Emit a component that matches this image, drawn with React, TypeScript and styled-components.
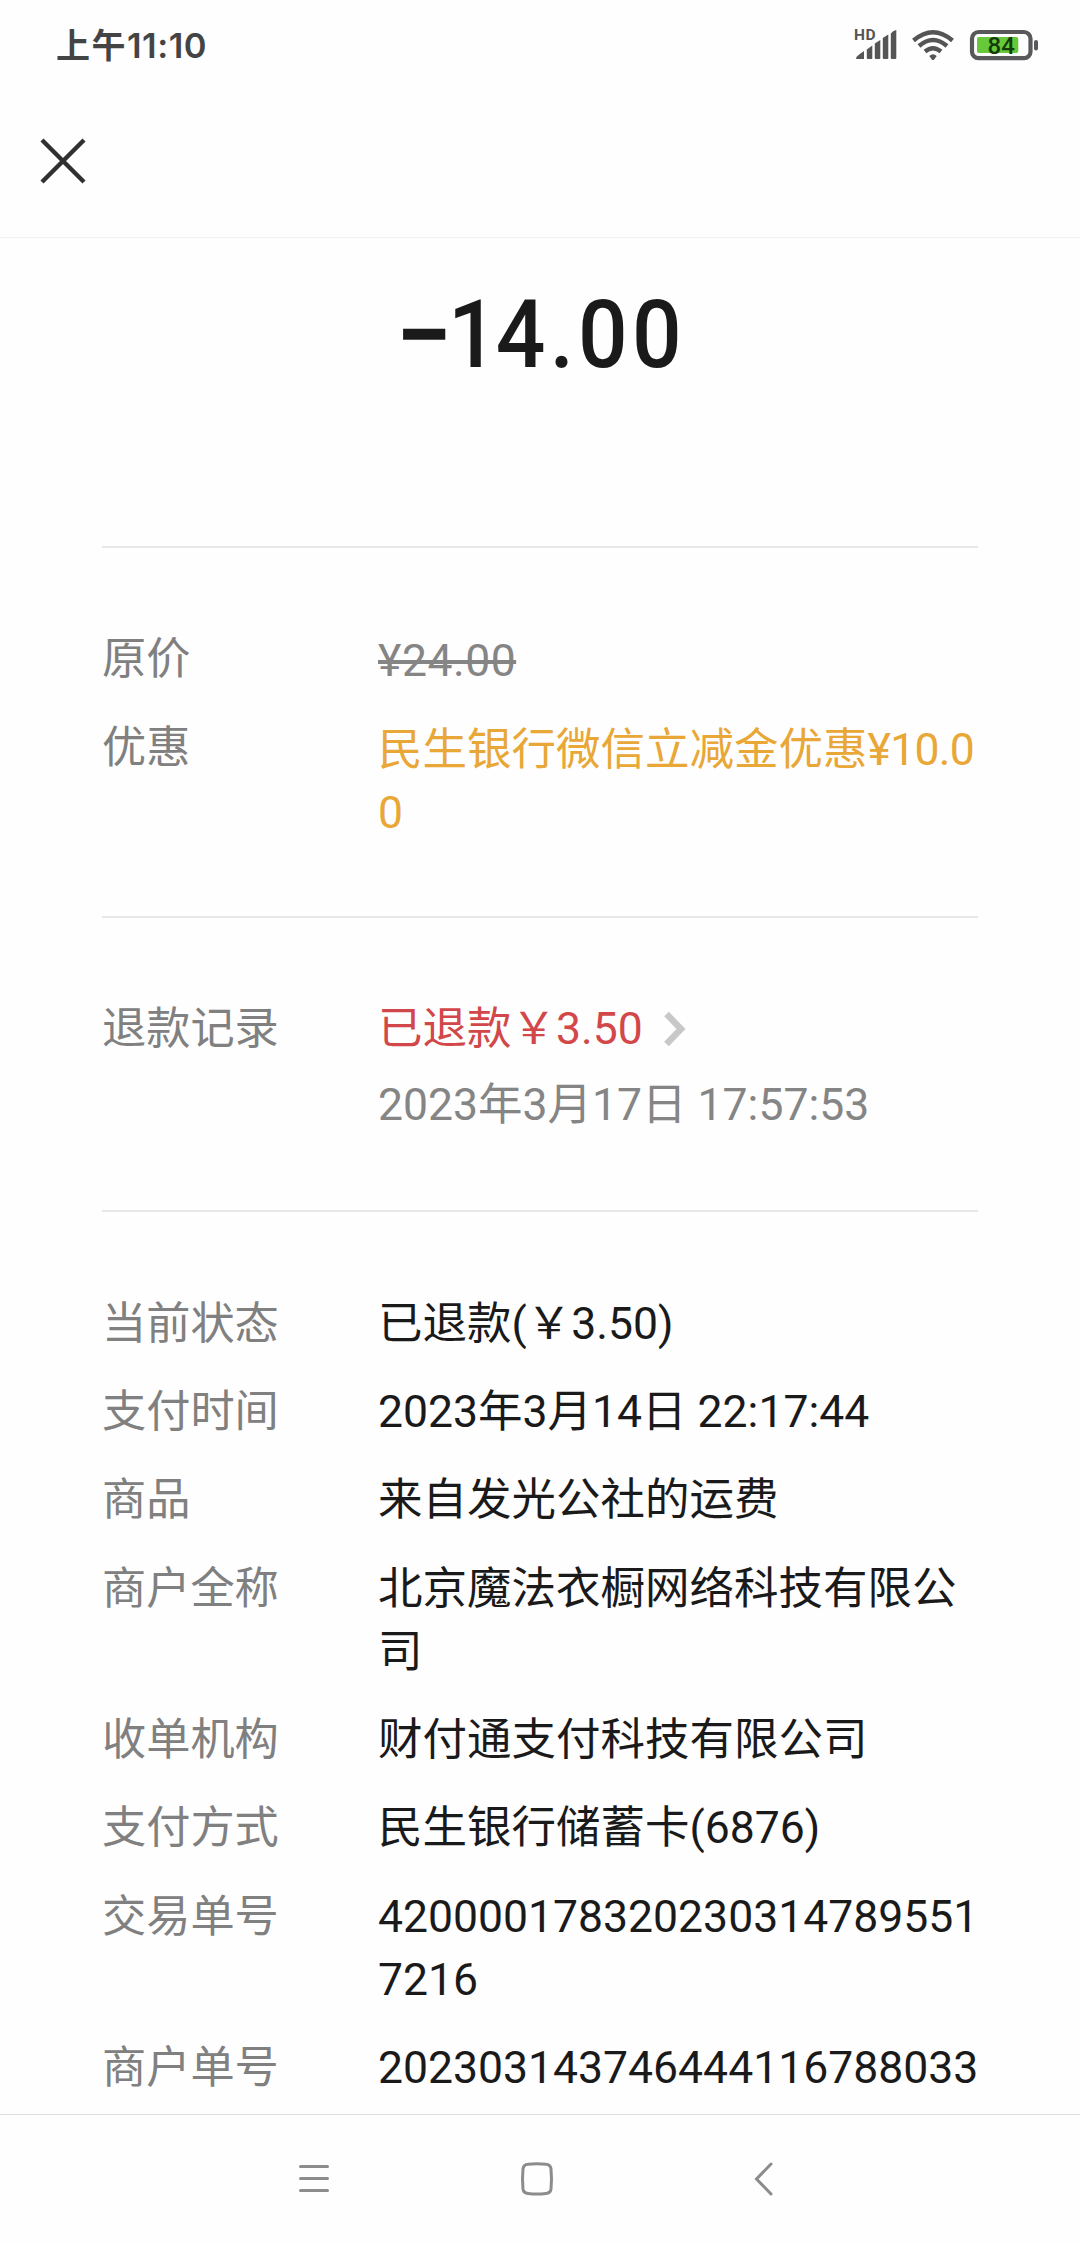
import React from "react";
import styled, { createGlobalStyle } from "styled-components";

const GlobalStyle = createGlobalStyle`
  * { box-sizing: border-box; }
  body { margin: 0; background: #fefefe; }
`;

const Screen = styled.div`
  display: flex;
  flex-direction: column;
  width: 1080px;
  height: 2244px;
  overflow: hidden;
  background: #fefefe;
  color: #1a1a1a;
  font-family: Roboto, "Noto Sans CJK SC", sans-serif;
  font-size: 44.5px;
  line-height: 63px;
`;

const StatusBar = styled.header`
  display: flex;
  flex: none;
  align-items: center;
  justify-content: space-between;
  height: 90px;
  padding: 0 41px 0 56px;
  color: #444;
`;

const Clock = styled.div`
  padding-top: 2px;
  font: 600 34.5px/50px Inter, "Noto Sans CJK SC", sans-serif;
  letter-spacing: 0.5px;
`;

const Meridiem = styled.span`
  font-size: 34px;
  font-weight: 700;
  letter-spacing: 1.5px;
`;

const Indicators = styled.div`
  display: flex;
  align-items: center;
`;

const Toolbar = styled.div`
  display: flex;
  flex: none;
  align-items: center;
  height: 148px;
  padding: 0 0 6px 39px;
  border-bottom: 1px solid #f1f1f1;
`;

const IconButton = styled.button<{ $width: number; $height: number }>`
  display: grid;
  place-items: center;
  width: ${(p) => p.$width}px;
  height: ${(p) => p.$height}px;
  padding: 0;
  border: 0;
  background: none;
`;

const Content = styled.main`
  flex: 1;
  min-height: 0;
  overflow: hidden;
  padding: 0 102px;
`;

const Amount = styled.h1`
  display: flex;
  justify-content: center;
  margin: 0;
  height: 308px;
  padding-top: 41px;
  font-size: 95px;
  font-weight: 500;
  line-height: 112px;
`;

const Sign = styled.span`
  width: 52px;
  font-size: 100px;
  font-weight: 700;
  letter-spacing: -6px;
`;

const Figure = styled.span`
  width: 236px;
  letter-spacing: 4.5px;
  white-space: nowrap;
  transform: scaleX(0.92);
  transform-origin: left;
`;

const LeadDigit = styled.span`
  letter-spacing: -2px;
`;

const Section = styled.section<{ $top: number; $bottom: number; $gap: number }>`
  display: flex;
  flex-direction: column;
  gap: ${(p) => p.$gap}px;
  padding: ${(p) => p.$top}px 0 ${(p) => p.$bottom}px;
  border-top: 2px solid #e8e8e8;
`;

const Row = styled.div`
  display: grid;
  grid-template-columns: 276px 604px;
`;

const Label = styled.div<{ $raise?: number }>`
  margin-top: ${(p) => -(p.$raise ?? 0)}px;
  color: #808080;
  font-size: 44.2px;
`;

const Value = styled.div<{ $color?: string; $struck?: boolean }>`
  color: ${(p) => p.$color ?? "#1a1a1a"};
  word-break: break-all;
  text-decoration: ${(p) => (p.$struck ? "line-through 4px" : "none")};
  letter-spacing: ${(p) => (p.$struck ? "0.5px" : "0")};
`;

const Price = styled.span`
  letter-spacing: -0.7px;
`;

const RefundLink = styled.div`
  display: flex;
  align-items: center;
  gap: 20px;
  color: #d2484a;
`;

const RefundTime = styled.div`
  margin-top: 13px;
  color: #858585;
`;

const NavBar = styled.nav`
  display: flex;
  flex: none;
  align-items: flex-start;
  justify-content: space-between;
  height: 130px;
  padding: 39px 292px 0 290px;
  border-top: 1px solid #dedede;
`;

const details: [string, string][] = [
  ["当前状态", "已退款(￥3.50)"],
  ["支付时间", "2023年3月14日 22:17:44"],
  ["商品", "来自发光公社的运费"],
  ["商户全称", "北京魔法衣橱网络科技有限公司"],
  ["收单机构", "财付通支付科技有限公司"],
  ["支付方式", "民生银行储蓄卡(6876)"],
  ["交易单号", "4200001783202303147895517216"],
  ["商户单号", "202303143746444116788033"],
];

const StatusIcons = () => (
  <svg width="186" height="40" viewBox="853 25 186 40" fill="none">
    <text x="854" y="40" fontFamily="Roboto" fontSize="15.5" fontWeight="700" letterSpacing="0.6" fill="#555">HD</text>
    <g fill="#555">
      <path d="M856 58.2Q856 56.5 864 51V59H856.8Q856 59 856 58.2Z" />
      <path d="M866.8 49.5L872.3 45.5V58Q872.3 59 871.3 59H867.8Q866.8 59 866.8 58Z" />
      <path d="M874.8 43.5L880.3 40V58Q880.3 59 879.3 59H875.8Q874.8 59 874.8 58Z" />
      <path d="M882.8 38L888.3 34.5V58Q888.3 59 887.3 59H883.8Q882.8 59 882.8 58Z" />
      <path d="M890.8 33.5Q893.5 30 896.3 30V58Q896.3 59 895.3 59H891.8Q890.8 59 890.8 58Z" />
    </g>
    <g stroke="#555" strokeWidth="4.4">
      <path d="M913.5 40.5Q933 24 952.5 40.5" />
      <path d="M919 46Q933 34 947 46" />
      <path d="M925 51.5Q933 45 941 51.5" />
    </g>
    <path d="M929.3 56Q933 52.5 936.7 56L934.2 59.5Q933 60.5 931.8 59.5Z" fill="#555" />
    <rect x="972" y="32" width="58.5" height="26.2" rx="6.5" stroke="#59595c" strokeWidth="4.2" />
    <rect x="977" y="37" width="41.3" height="16" rx="2" fill="#67c83a" />
    <rect x="1034" y="40" width="4" height="10.5" rx="2" fill="#59595c" />
    <text x="987.5" y="54" fontFamily="Roboto" fontSize="24" fontWeight="500" fill="#123c08">84</text>
  </svg>
);

export default function App() {
  return (
    <Screen>
      <GlobalStyle />
      <StatusBar>
        <Clock>
          <Meridiem>上午</Meridiem>11:10
        </Clock>
        <Indicators>
          <StatusIcons />
        </Indicators>
      </StatusBar>

      <Toolbar>
        <IconButton $width={48} $height={48} aria-label="关闭">
          <svg width="48" height="48" viewBox="0 0 48 48" stroke="#303030" strokeWidth="4.4">
            <path d="M3 3L45 45M45 3L3 45" />
          </svg>
        </IconButton>
      </Toolbar>

      <Content>
        <Amount>
          <Sign>−</Sign>
          <Figure>
            <LeadDigit>1</LeadDigit>4.00
          </Figure>
        </Amount>

        <Section $top={82} $bottom={71} $gap={26}>
          <Row>
            <Label $raise={2}>原价</Label>
            <Value $color="#858585" $struck>¥24.00</Value>
          </Row>
          <Row>
            <Label $raise={2}>优惠</Label>
            <Value $color="#e8a736">
              民生银行微信立减金优惠<Price>¥10.0</Price><Price>0</Price>
            </Value>
          </Row>
        </Section>

        <Section $top={80} $bottom={73} $gap={0}>
          <Row>
            <Label>退款记录</Label>
            <div>
              <RefundLink>
                已退款￥3.50
                <svg width="24" height="38" viewBox="0 0 24 38" fill="none" stroke="#c8c8c8" strokeWidth="6.5">
                  <path d="M3.5 3L18 18L3.5 33" />
                </svg>
              </RefundLink>
              <RefundTime>2023年3月17日 17:57:53</RefundTime>
            </div>
          </Row>
        </Section>

        <Section $top={80.5} $bottom={0} $gap={25.4}>
          {details.map(([label, value]) => (
            <Row key={label}>
              <Label>{label}</Label>
              <Value>{value}</Value>
            </Row>
          ))}
        </Section>
      </Content>

      <NavBar>
        <IconButton $width={48} $height={48} aria-label="菜单">
          <svg width="48" height="48" viewBox="0 0 48 48" stroke="#8c8c8c" strokeWidth="3" strokeLinecap="round">
            <path d="M10.5 12.5H37.5M10.5 24.5H37.5M10.5 36.5H37.5" />
          </svg>
        </IconButton>
        <IconButton $width={48} $height={48} aria-label="主页">
          <svg width="48" height="48" viewBox="0 0 48 48" fill="none" stroke="#8c8c8c" strokeWidth="3">
            <path d="M13 10.3Q22 9 31 10.3Q35.5 10.5 36 15Q37 25 36 35Q35.5 39 31 39.4Q22 40.5 13 39.4Q8.5 39 8 35Q7 25 8 15Q8.5 10.5 13 10.3Z" />
          </svg>
        </IconButton>
        <IconButton $width={48} $height={48} aria-label="返回">
          <svg width="48" height="48" viewBox="0 0 48 48" fill="none" stroke="#8c8c8c" strokeWidth="3" strokeLinecap="round">
            <path d="M31 10L16.5 25L31 40" />
          </svg>
        </IconButton>
      </NavBar>
    </Screen>
  );
}
